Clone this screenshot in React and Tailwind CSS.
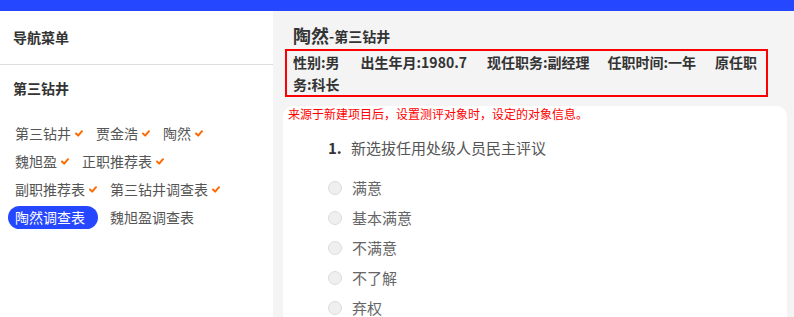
import React from "react";

const font = { fontFamily: '"Noto Sans CJK SC", "Noto Sans", sans-serif' };

function Check({ hidden }) {
  return (
    <span className="w-[13px] h-[10px] flex items-center pl-[4px]">
      {!hidden && (
        <svg width="8" height="7" viewBox="0 0 8 7">
          <polyline points="1,3.5 3.2,5.6 7,1.2" fill="none" stroke="#ff6a00" strokeWidth="2" strokeLinecap="round" strokeLinejoin="round" />
        </svg>
      )}
    </span>
  );
}

const tags = [
  { t: "第三钻井", c: true },
  { t: "贾金浩", c: true },
  { t: "陶然", c: true },
  { t: "魏旭盈", c: true },
  { t: "正职推荐表", c: true },
  { t: "副职推荐表", c: true },
  { t: "第三钻井调查表", c: true },
  { t: "陶然调查表", c: false, active: true },
  { t: "魏旭盈调查表", c: false },
];

const options = ["满意", "基本满意", "不满意", "不了解", "弃权"];

export default function App() {
  return (
    <div className="h-screen flex flex-col overflow-hidden" style={font}>
      <div className="h-[11px] bg-[#2547ff] shrink-0" />
      <div className="flex flex-1 min-h-0">
        <aside className="w-[273px] bg-white shrink-0">
          <div className="h-[54px] flex items-center pl-[13px] border-b border-[#dedede] text-[14px] font-bold text-[#333]">
            导航菜单
          </div>
          <div className="h-[44px] flex items-center pl-[13px] mt-[1px] text-[14px] font-bold text-[#333]">
            第三钻井
          </div>
          <div className="flex flex-wrap gap-x-[5px] gap-y-[5px] pl-[8px] w-[250px] mt-[12px]">
            {tags.map((g) => (
              <span
                key={g.t}
                className={
                  "h-[23px] flex items-center pl-[7px] text-[14px] rounded-full " +
                  (g.active ? "bg-[#2547ff] text-white" : "text-[#555]")
                }
              >
                {g.t}
                <Check hidden={!g.c} />
              </span>
            ))}
          </div>
        </aside>
        <main className="flex-1 bg-[#f4f4f4] pl-[10px] pr-[7px] min-w-0">
          <div className="ml-[2px]">
            <div className="mt-[12px] h-[24px] flex items-end pl-[8px] text-[#333] font-bold leading-[24px]">
              <span className="text-[18px]">陶然</span>
              <span className="text-[14px] leading-[22px]">-第三钻井</span>
            </div>
            <div className="mt-[2px] w-[483px] border-2 border-[#ff0000] pl-[6px] pr-[4px] text-[14px] font-bold text-[#333] leading-[22px]">
              <span className="mr-[21px]">性别:男</span>
              <span className="mr-[20px]">出生年月:1980.7</span>
              <span className="mr-[18px]">现任职务:副经理</span>
              <span className="mr-[19px]">任职时间:一年</span>
              <span>原任职务:科长</span>
            </div>
          </div>
          <div className="mt-[12px] bg-white rounded-t-[10px] h-[400px]">
            <div className="-mt-[3px] pl-[5px] text-[12px] leading-[16px] text-[#ff0000]">
              来源于新建项目后，设置测评对象时，设定的对象信息。
            </div>
            <div className="mt-[14px] pl-[45px] flex items-center h-[24px] text-[15px]">
              <span className="w-[23px] font-bold text-[#333]">1.</span>
              <span className="text-[#555]">新选拔任用处级人员民主评议</span>
            </div>
            <div className="mt-[13px] pl-[45px] flex flex-col">
              {options.map((o) => (
                <div key={o} className="h-[30px] flex items-center">
                  <span className="w-[14px] h-[14px] rounded-full bg-[#efefef] border border-[#dcdcdc] shrink-0" />
                  <span className="ml-[10px] text-[15px] text-[#666]">{o}</span>
                </div>
              ))}
            </div>
          </div>
        </main>
      </div>
    </div>
  );
}
